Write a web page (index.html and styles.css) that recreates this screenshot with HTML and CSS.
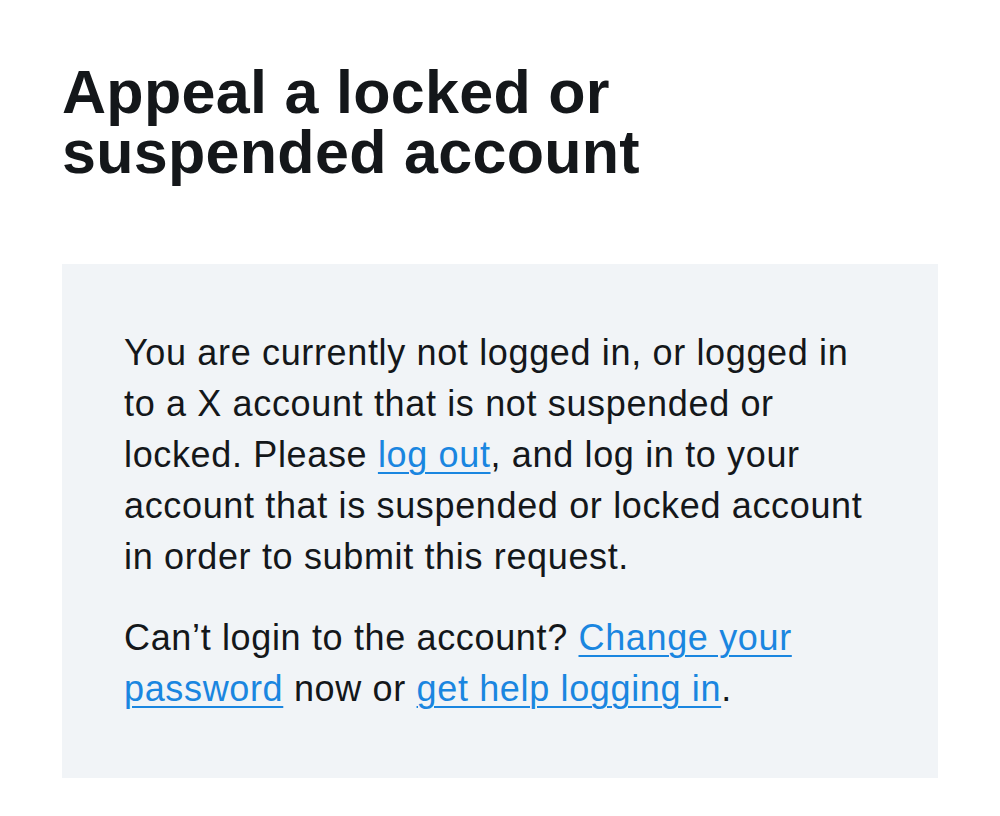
FILE: index.html
```html
<!DOCTYPE html>
<html lang="en">
<head>
<meta charset="utf-8">
<title>Appeal a locked or suspended account</title>
<link rel="stylesheet" href="styles.css">
</head>
<body>
<main class="page">
  <h1 class="title">Appeal a locked or<br>suspended account</h1>
  <section class="notice">
    <p>You are currently not logged in, or logged in to a X account that is not suspended or locked. Please <a href="#">log out</a>, and log in to your account that is suspended or locked account in order to submit this request.</p>
    <p>Can’t login to the account? <a href="#">Change your password</a> now or <a href="#">get help logging in</a>.</p>
  </section>
</main>
</body>
</html>
```

FILE: styles.css
```css
html, body {
  margin: 0;
  padding: 0;
  background: #ffffff;
}
body {
  font-family: "Liberation Sans", Arial, Helvetica, sans-serif;
  color: #14171a;
}
.page {
  padding: 62px 62px 40px;
}
.title {
  margin: 0 0 82px;
  font-size: 61px;
  line-height: 60px;
  font-weight: 700;
  letter-spacing: 0.3px;
}
.notice {
  background: #f1f4f7;
  padding: 63px 62px 64px;
}
.notice p {
  margin: 0 0 30px;
  font-size: 36px;
  line-height: 51px;
  letter-spacing: 0.65px;
}
.notice p:last-child {
  margin-bottom: 0;
}
.notice a {
  color: #1a86e0;
  text-decoration: underline;
  text-decoration-thickness: 2px;
  text-underline-offset: 5px;
}
```
